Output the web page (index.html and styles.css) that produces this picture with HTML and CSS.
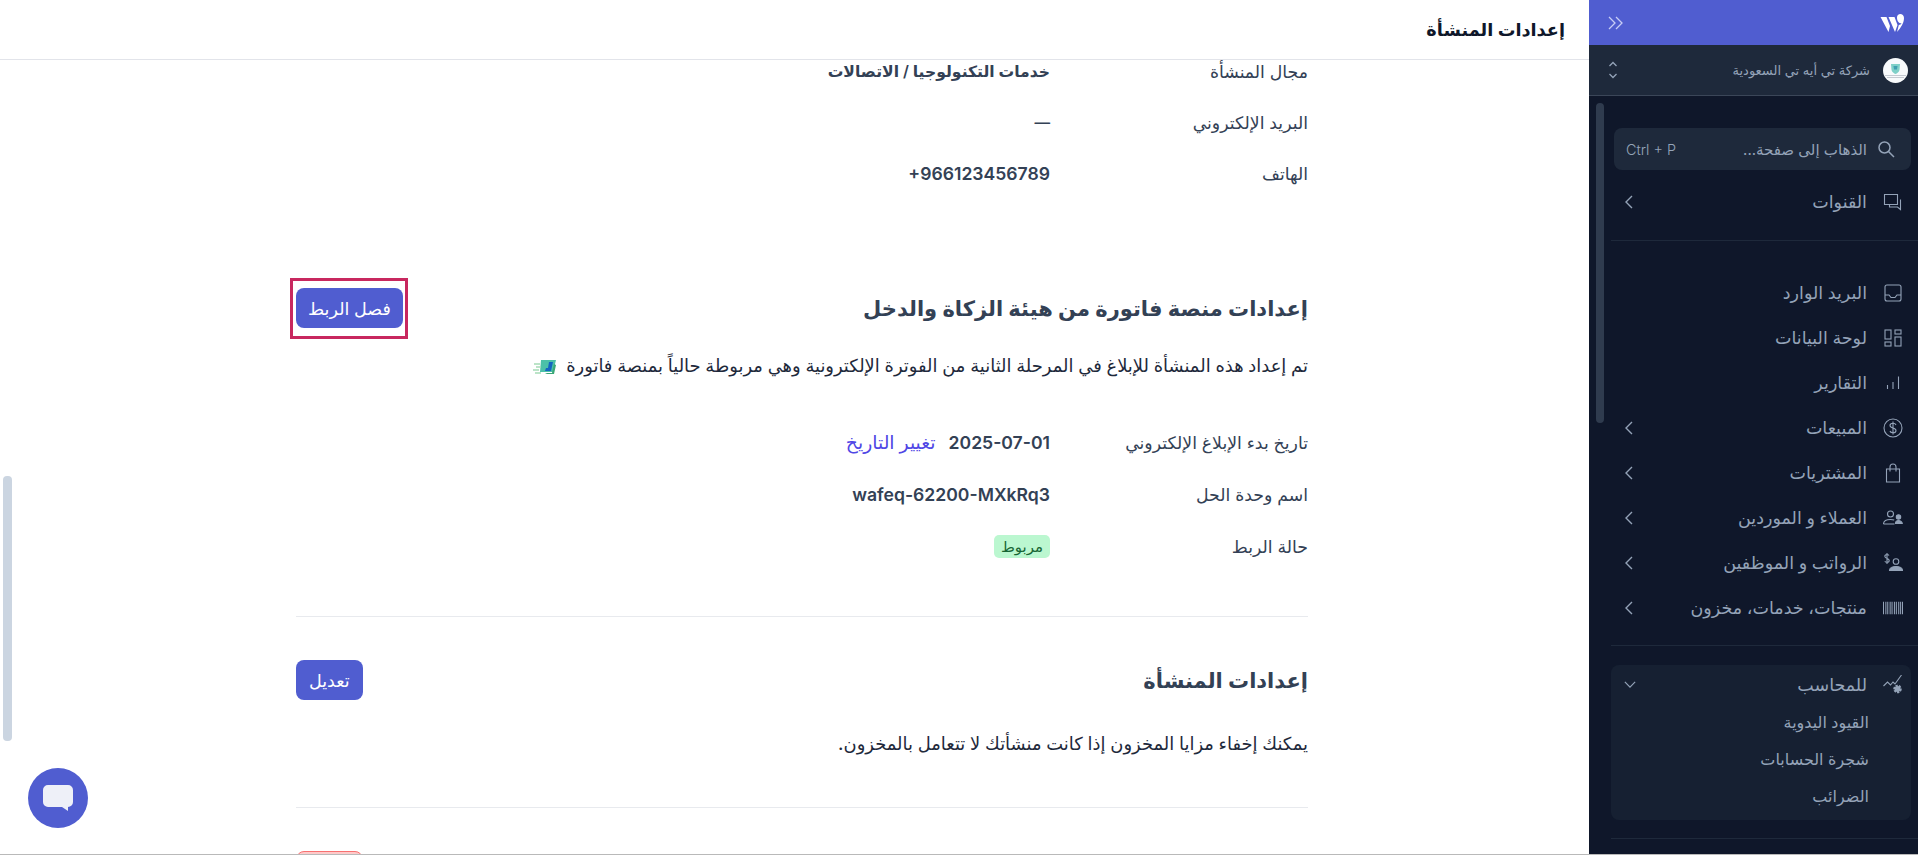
FILE: index.html
```html
<!DOCTYPE html>
<html lang="ar" dir="rtl">
<head>
    <meta charset="UTF-8">
    <meta name="viewport" content="width=device-width, initial-scale=1.0">
    <title>إعدادات المنشأة</title>
    <link rel="stylesheet" href="styles.css">
</head>
<body>
    <div class="app">
        <!-- Sidebar -->
        <aside class="sidebar">
            <div class="brand-bar">
                <svg class="logo" viewBox="0 0 24 18" width="24" height="18"><path d="M.5 3h6l3.500 9-1.500 6zM8.500 3h6l3 8-2.500 7zM17 3.500c0-2 1.500-3.500 3.300-3.500S24 1.500 24 4c0 5.500-3.500 10-7 14l1.800-7c1.200 0 2.200-.6 2.700-1.700-2.300.2-4.500-2-4.500-5.800z" fill="#fff"/></svg>
                <svg class="collapse-icon" viewBox="0 0 16 14" width="16" height="14" fill="none" stroke="#c7cdf5" stroke-width="1.300"><path d="M1 1l6 6-6 6M8 1l6 6-6 6"/></svg>
            </div>
            <div class="company-bar">
                <svg class="company-logo" viewBox="0 0 25 25" width="25" height="25"><circle cx="12.500" cy="12.500" r="12.500" fill="#f8fafc"/><path d="M8 6h9l-.5 6c-.5 2-2.500 3.500-4 4-1.500-.5-3.500-2-4-4z" fill="#7fd0c8"/><path d="M10.500 8h4l-.5 3.500h-3z" fill="#3f9fb0"/><path d="M2 17.500h21M4 19.500h17" stroke="#b8bec6" stroke-width=".8"/></svg>
                <span class="company-name">شركة تي أيه تي السعودية</span>
                <svg class="updown" viewBox="0 0 10 18" width="10" height="18" fill="none" stroke="#94a3b8" stroke-width="1.300"><path d="M1.500 5L5 1.500 8.500 5M1.500 13L5 16.500 8.500 13"/></svg>
            </div>
            <div class="sidebar-body">
                <div class="sidebar-thumb"></div>
                <div class="search-box">
                    <svg viewBox="0 0 18 18" width="18" height="18" fill="none" stroke="#94a3b8" stroke-width="1.500"><circle cx="7.500" cy="7.500" r="5.500"/><path d="M11.500 11.500L17 17"/></svg>
                    <span class="search-text">الذهاب إلى صفحة...</span>
                    <span class="search-key" dir="ltr">Ctrl + P</span>
                </div>
                <a class="nav-item channels">
                    <svg class="nav-icon" viewBox="0 0 20 20"><path d="M1.500 2.500h13v10h-13zM17.500 7.500v10l-3-2.500H6.500v-2.500"/></svg>
                    <span class="nav-label">القنوات</span>
                    <svg class="chev" viewBox="0 0 8 14"><path d="M7 1L1 7l6 6"/></svg>
                </a>
                <div class="nav-divider first"></div>
                <nav class="nav-group">
                    <a class="nav-item">
                        <svg class="nav-icon" viewBox="0 0 20 20"><rect x="2" y="2" width="16" height="16" rx="2"/><path d="M2 12h4l2 2.500h4l2-2.500h4"/></svg>
                        <span class="nav-label">البريد الوارد</span>
                    </a>
                    <a class="nav-item">
                        <svg class="nav-icon" viewBox="0 0 20 20"><rect x="2" y="2" width="6" height="9"/><rect x="2" y="14" width="6" height="4"/><rect x="12" y="2" width="6" height="4"/><rect x="12" y="9" width="6" height="9"/></svg>
                        <span class="nav-label">لوحة البيانات</span>
                    </a>
                    <a class="nav-item">
                        <svg class="nav-icon" viewBox="0 0 20 20"><path d="M4.500 16v-4M10 16V9M15.500 16V3.500"/></svg>
                        <span class="nav-label">التقارير</span>
                    </a>
                    <a class="nav-item">
                        <svg class="nav-icon" viewBox="0 0 20 20"><circle cx="10" cy="10" r="9"/><path d="M13 7c-.5-1.200-1.500-1.800-3-1.800-1.700 0-3 .9-3 2.300 0 3.200 6 1.700 6 5 0 1.400-1.300 2.300-3 2.300-1.500 0-2.600-.6-3-1.800M10 3.500v13"/></svg>
                        <span class="nav-label">المبيعات</span>
                        <svg class="chev" viewBox="0 0 8 14"><path d="M7 1L1 7l6 6"/></svg>
                    </a>
                    <a class="nav-item">
                        <svg class="nav-icon" viewBox="0 0 20 20"><path d="M3.500 6h13v13h-13zM7 8.500V4a3 3 0 0 1 6 0v4.500"/></svg>
                        <span class="nav-label">المشتريات</span>
                        <svg class="chev" viewBox="0 0 8 14"><path d="M7 1L1 7l6 6"/></svg>
                    </a>
                    <a class="nav-item">
                        <svg class="nav-icon" viewBox="0 0 20 20"><circle cx="7.500" cy="6" r="3"/><path d="M.5 16c0-3 3-4.500 7-4.500 1.500 0 2.700.2 3.700.6M.5 16h11"/><circle cx="15.500" cy="9" r="2.200" fill="#94a3b8"/><path d="M12.500 15.500c0-1.800 1.300-3 3-3s3.800 1.200 3.800 3z" fill="#94a3b8"/></svg>
                        <span class="nav-label">العملاء و الموردين</span>
                        <svg class="chev" viewBox="0 0 8 14"><path d="M7 1L1 7l6 6"/></svg>
                    </a>
                    <a class="nav-item">
                        <svg class="nav-icon" viewBox="0 0 20 20"><circle cx="13" cy="8.500" r="2.800"/><path d="M6.500 17.500c0-2.500 3-4 6.500-4s6.500 1.500 6.500 4z" fill="#94a3b8"/><path d="M6 2.500C5.500 1.800 4.800 1.500 4 1.500c-1.200 0-2.200.7-2.200 1.800C1.800 6 6.200 5 6.200 7.500c0 1.100-1 1.800-2.200 1.800-.9 0-1.700-.4-2.200-1.100M4 0v11"/></svg>
                        <span class="nav-label">الرواتب و الموظفين</span>
                        <svg class="chev" viewBox="0 0 8 14"><path d="M7 1L1 7l6 6"/></svg>
                    </a>
                    <a class="nav-item">
                        <svg class="nav-icon barcode" viewBox="0 0 21 20"><path d="M.5 3.500v13M3 3.500v13M5 3.500v13M7.500 3.500v13M9.500 3.500v13M12 3.500v13M14 3.500v13M16.500 3.500v13M18.500 3.500v13M20.500 3.500v13"/></svg>
                        <span class="nav-label">منتجات، خدمات، مخزون</span>
                        <svg class="chev" viewBox="0 0 8 14"><path d="M7 1L1 7l6 6"/></svg>
                    </a>
                </nav>
                <div class="nav-divider second"></div>
                <div class="accountant-box">
                    <a class="nav-item open">
                        <svg class="nav-icon" viewBox="0 0 20 20"><path d="M.5 11l4-4 3 3 2.500-3 2 2 6.500-9"/><circle cx="14.500" cy="14" r="3" fill="#94a3b8" stroke-dasharray="2 1" stroke-width="2.500"/></svg>
                        <span class="nav-label">للمحاسب</span>
                        <svg class="chev down" viewBox="0 0 14 8"><path d="M1 1l6 6 6-6"/></svg>
                    </a>
                    <a class="sub-item">القيود اليدوية</a>
                    <a class="sub-item">شجرة الحسابات</a>
                    <a class="sub-item">الضرائب</a>
                </div>
                <div class="nav-divider third"></div>
            </div>
        </aside>

        <!-- Main content -->
        <main class="main">
            <header class="page-header">إعدادات المنشأة</header>
            <div class="scroll-thumb"></div>
            <div class="scroll-area">
                <div class="content">
                    <div class="info-list top-list">
                        <div class="info-row"><span class="info-label">مجال المنشأة</span><span class="info-value">خدمات التكنولوجيا / الاتصالات</span></div>
                        <div class="info-row"><span class="info-label">البريد الإلكتروني</span><span class="info-value">—</span></div>
                        <div class="info-row"><span class="info-label">الهاتف</span><span class="info-value latin" dir="ltr">+966123456789</span></div>
                    </div>

                    <section class="settings-section fatoora">
                        <div class="section-head">
                            <h2>إعدادات منصة فاتورة من هيئة الزكاة والدخل</h2>
                            <button class="btn marked" type="button">فصل الربط</button>
                        </div>
                        <p class="lead">
                            تم إعداد هذه المنشأة للإبلاغ في المرحلة الثانية من الفوترة الإلكترونية وهي مربوطة حالياً بمنصة فاتورة
                            <svg class="fatoora-icon" viewBox="0 0 24 16" width="24" height="16"><path d="M8 1h15l-3 12H7z" fill="#4cc0a8"/><path d="M12 14l2 1h7l2-9-2-1-2 9z" fill="#3aa776"/><path d="M16 3h4l-2 9h-6l1-3h2z" fill="#1565c0"/><path d="M1 5h6M3 8h5M0 11h6M2 14h6" stroke="#a6dcb6" stroke-width="1.500"/></svg>
                        </p>
                        <div class="info-list tall">
                            <div class="info-row">
                                <span class="info-label">تاريخ بدء الإبلاغ الإلكتروني</span>
                                <span class="info-value latin">2025-07-01<a class="link">تغيير التاريخ</a></span>
                            </div>
                            <div class="info-row"><span class="info-label">اسم وحدة الحل</span><span class="info-value latin">wafeq-62200-MXkRq3</span></div>
                            <div class="info-row"><span class="info-label">حالة الربط</span><span class="info-value"><span class="chip-green">مربوط</span></span></div>
                        </div>
                    </section>

                    <section class="settings-section business">
                        <div class="section-head">
                            <h2>إعدادات المنشأة</h2>
                            <button class="btn" type="button">تعديل</button>
                        </div>
                        <p class="lead">يمكنك إخفاء مزايا المخزون إذا كانت منشأتك لا تتعامل بالمخزون.</p>
                    </section>

                    <section class="settings-section danger">
                        <div class="chip-red"></div>
                    </section>
                </div>
            </div>
            <button class="chat-button" type="button">
                <svg viewBox="0 0 30 26" width="30" height="26"><path d="M5 0h20a5 5 0 0 1 5 5v12a5 5 0 0 1-5 5v4l-6-4H5a5 5 0 0 1-5-5V5a5 5 0 0 1 5-5z" fill="#eef0f8"/></svg>
            </button>
        </main>
    </div>
</body>
</html>
```

FILE: styles.css
```css
* {
    box-sizing: border-box;
}

html, body {
    margin: 0;
    padding: 0;
    height: 100%;
    overflow: hidden;
}

body {
    font-family: Inter, "Noto Sans", "DejaVu Sans", sans-serif;
    background-color: #ffffff;
    color: #334155;
}

.app {
    display: flex;
    height: 854px;
    border-bottom: 1px solid #b9b9b9;
    box-sizing: content-box;
}

/* Sidebar */
.sidebar {
    width: 329px;
    flex-shrink: 0;
    display: flex;
    flex-direction: column;
    background-color: #0f172a;
    color: #94a3b8;
}

.brand-bar {
    height: 45px;
    display: flex;
    align-items: center;
    justify-content: space-between;
    padding: 0 14px 0 19px;
    background-color: #505dd0;
}

.company-bar {
    height: 51px;
    display: flex;
    align-items: center;
    padding: 0 10px 0 19px;
    background-color: #1e293b;
    border-bottom: 1px solid #3b4658;
}

.company-logo {
    flex-shrink: 0;
}

.company-name {
    flex: 1;
    margin-right: 13px;
    font-size: 13px;
}

.sidebar-body {
    position: relative;
    flex: 1;
    padding-top: 32px;
    overflow: hidden;
}

.sidebar-thumb {
    position: absolute;
    left: 7px;
    top: 7px;
    width: 8px;
    height: 320px;
    border-radius: 4px;
    background-color: #2f3b4e;
}

.search-box {
    height: 42px;
    margin: 0 7px 0 25px;
    padding: 0 16px 0 12px;
    display: flex;
    align-items: center;
    gap: 10px;
    border-radius: 8px;
    background-color: #1e293b;
    font-size: 15px;
}

.search-text {
    flex: 1;
}

.search-key {
    font-size: 14.400px;
    font-weight: 300;
}

.nav-item {
    height: 45px;
    display: flex;
    align-items: center;
    padding: 0 15px 0 36px;
    font-size: 17.500px;
    font-weight: 500;
    color: #94a3b8;
}

.channels {
    margin-top: 9px;
}

.nav-icon {
    width: 20px;
    height: 20px;
    flex-shrink: 0;
    fill: none;
    stroke: #94a3b8;
    stroke-width: 1.100;
}

.nav-label {
    flex: 1;
    margin-right: 16px;
}

.chev {
    width: 8px;
    height: 14px;
    fill: none;
    stroke: #94a3b8;
    stroke-width: 1.400;
}

.chev.down {
    width: 12px;
    height: 7px;
}

.nav-divider {
    height: 1px;
    margin-left: 22px;
    background-color: #1e293b;
}

.nav-divider.first {
    margin-top: 16px;
}

.nav-group {
    margin-top: 29px;
}

.nav-divider.second {
    margin-top: 15px;
}

.accountant-box {
    margin: 19px 7px 0 22px;
    height: 155px;
    border-radius: 8px;
    background-color: #162032;
}

.accountant-box .nav-item {
    height: 39px;
    padding: 0 8px 0 13px;
}

.sub-item {
    display: block;
    height: 37px;
    line-height: 37px;
    padding-right: 42px;
    font-size: 16px;
    color: #94a3b8;
}

.nav-divider.third {
    margin-top: 18px;
}

/* Main */
.main {
    position: relative;
    flex: 1;
    min-width: 0;
    display: flex;
    flex-direction: column;
}

.page-header {
    height: 60px;
    flex-shrink: 0;
    display: flex;
    align-items: center;
    padding-right: 24px;
    font-size: 17.700px;
    font-weight: 600;
    color: #0f172a;
    border-bottom: 1px solid #e2e4ea;
    background-color: #ffffff;
}

.scroll-area {
    flex: 1;
    overflow: hidden;
}

.content {
    width: 1012px;
    margin-right: 281px;
    margin-top: -14px;
}

.info-row {
    height: 51px;
    display: flex;
    align-items: center;
    font-size: 17.300px;
}

.info-list.tall .info-row {
    height: 52px;
}

.info-label {
    width: 258px;
    flex-shrink: 0;
}

.info-value {
    font-size: 15.600px;
    font-weight: 600;
    display: flex;
    align-items: center;
    gap: 13px;
}

.info-value.latin {
    font-size: 17.600px;
}

.link {
    color: #4f46e5;
    font-size: 18.800px;
    font-weight: 500;
}

.settings-section {
    border-bottom: 1px solid #e8eaee;
}

.fatoora {
    margin-top: 89px;
    padding-bottom: 44px;
}

.business {
    padding-top: 43px;
    padding-bottom: 51px;
}

.danger {
    border-bottom: 0;
    padding-top: 43px;
}

.section-head {
    height: 40px;
    display: flex;
    align-items: center;
    justify-content: space-between;
}

.section-head h2 {
    margin: 0;
    font-size: 21px;
    font-weight: 600;
    color: #334155;
}

.btn {
    position: relative;
    height: 40px;
    padding: 0 13px;
    border: none;
    border-radius: 8px;
    background-color: #505dd0;
    color: #ffffff;
    font-family: inherit;
    font-size: 17.500px;
    font-weight: 500;
}

.btn.marked {
    padding: 0 12px;
}

.btn.marked::after {
    content: "";
    position: absolute;
    left: -6px;
    right: -5px;
    top: -10px;
    bottom: -11px;
    border: 3px solid #c8285f;
}

.lead {
    margin: 26px 0 0;
    font-size: 17.900px;
    font-weight: 500;
    line-height: 24px;
    color: #1e293b;
}

.fatoora-icon {
    vertical-align: middle;
    margin-right: 4px;
}

.fatoora .info-list {
    margin-top: 38px;
}

.business .lead {
    margin-top: 32px;
}

.chip-green {
    padding: 2px 7px;
    border-radius: 5px;
    background-color: #bbf7d0;
    color: #166534;
    font-size: 15px;
    font-weight: 500;
}

.chip-red {
    width: 67px;
    height: 40px;
    margin-right: auto;
    border-radius: 8px;
    background-color: #fecaca;
    border: 1px solid #f87171;
}

.scroll-thumb {
    position: absolute;
    left: 3px;
    top: 476px;
    width: 9px;
    height: 265px;
    border-radius: 4px;
    background-color: #cbd5e1;
}

.chat-button {
    position: absolute;
    left: 28px;
    top: 768px;
    width: 60px;
    height: 60px;
    padding: 0;
    border: none;
    border-radius: 50%;
    background-color: #505dd0;
    display: flex;
    align-items: center;
    justify-content: center;
}
```
